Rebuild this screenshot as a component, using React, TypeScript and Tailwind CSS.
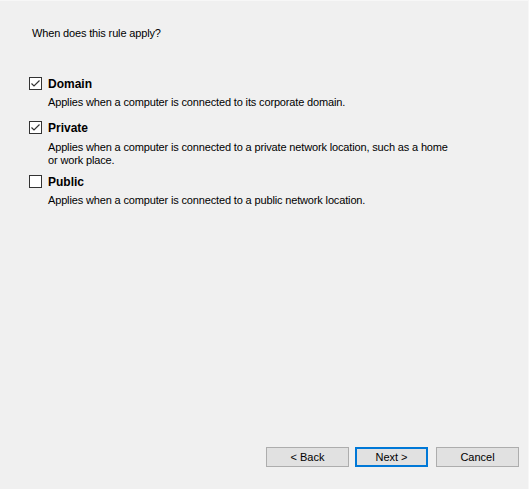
import React from "react";

interface RuleOption {
  id: string;
  label: string;
  checked: boolean;
  lines: string[];
}

const options: RuleOption[] = [
  {
    id: "domain",
    label: "Domain",
    checked: true,
    lines: ["Applies when a computer is connected to its corporate domain."],
  },
  {
    id: "private",
    label: "Private",
    checked: true,
    lines: [
      "Applies when a computer is connected to a private network location, such as a home",
      "or work place.",
    ],
  },
  {
    id: "public",
    label: "Public",
    checked: false,
    lines: ["Applies when a computer is connected to a public network location."],
  },
];

const CheckBox = ({ checked }: { checked: boolean }) => (
  <div className="w-[13px] h-[13px] border border-[#333333] bg-white flex items-center justify-center shrink-0">
    {checked && (
      <svg width="11" height="11" viewBox="0 0 11 11">
        <path d="M1.5 5.5 L4 8 L9.5 2.5" fill="none" stroke="#333333" strokeWidth="1.2" />
      </svg>
    )}
  </div>
);

const App = () => {
  return (
    <div
      className="w-[529px] h-[489px] bg-[#f0f0f0] border-t border-r border-[#f7f7f7] flex flex-col text-black text-[11px] tracking-[-0.15px]"
      style={{ fontFamily: '"Liberation Sans", Arial, sans-serif' }}
    >
      {/* Heading */}
      <p className="pl-[32px] pt-[25px] leading-[15px]">When does this rule apply?</p>

      {/* Profile options */}
      <div className="pl-[29px] mt-[36px] flex flex-col">
        {options.map((opt, i) => (
          <div key={opt.id} className={i === 1 ? "mt-[12px]" : i === 2 ? "mt-[8px]" : ""}>
            <div className="flex items-center gap-[6px] h-[13px]">
              <CheckBox checked={opt.checked} />
              <span className="font-bold text-[12px] tracking-normal">{opt.label}</span>
            </div>
            <div className={`pl-[19px] leading-[13px] ${i === 1 ? "mt-[7px]" : "mt-[6px]"}`}>
              {opt.lines.map((line) => (
                <div key={line}>{line}</div>
              ))}
            </div>
          </div>
        ))}
      </div>

      {/* Wizard buttons */}
      <div className="mt-auto mb-[22px] flex justify-end pr-[9px] gap-[6px] tracking-normal">
        <button className="w-[83px] h-[20px] border border-[#adadad] bg-[#e1e1e1]">&lt; Back</button>
        <button className="w-[73px] h-[20px] border-2 border-[#0078d7] bg-[#e1e1e1]">Next &gt;</button>
        <button className="w-[83px] h-[20px] border border-[#adadad] bg-[#e1e1e1] ml-[2px]">Cancel</button>
      </div>
    </div>
  );
};

export default App;
